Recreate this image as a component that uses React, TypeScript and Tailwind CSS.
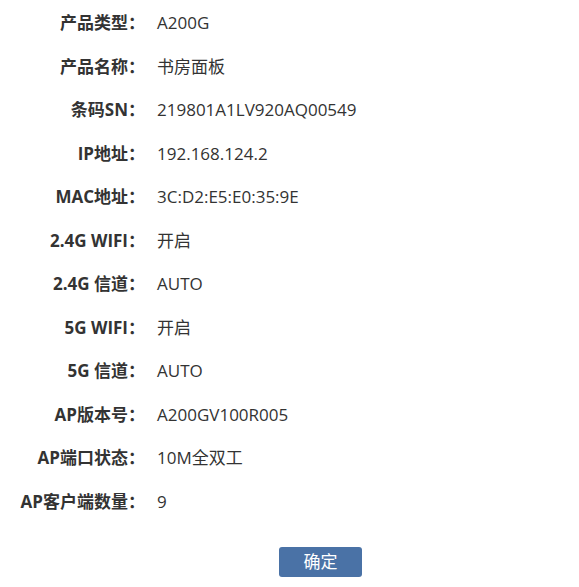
import React from "react";

const rows: [string, string][] = [
  ["产品类型：", "A200G"],
  ["产品名称：", "书房面板"],
  ["条码SN：", "219801A1LV920AQ00549"],
  ["IP地址：", "192.168.124.2"],
  ["MAC地址：", "3C:D2:E5:E0:35:9E"],
  ["2.4G WIFI：", "开启"],
  ["2.4G 信道：", "AUTO"],
  ["5G WIFI：", "开启"],
  ["5G 信道：", "AUTO"],
  ["AP版本号：", "A200GV100R005"],
  ["AP端口状态：", "10M全双工"],
  ["AP客户端数量：", "9"],
];

export default function App() {
  return (
    <div
      className="w-[579px] h-[587px] bg-white text-[#333] text-[17px] pt-[1px]"
      style={{ fontFamily: '"Open Sans", "Noto Sans CJK SC", sans-serif' }}
    >
      <div className="flex flex-col">
        {rows.map(([k, v]) => (
          <div key={k} className="flex items-center h-[43.55px]">
            <div className="w-[145px] text-right font-bold">{k}</div>
            <div className="ml-[12px]">{v}</div>
          </div>
        ))}
      </div>
      <div className="flex justify-center mt-[23px] pl-[62px]">
        <button className="w-[83px] h-[30px] rounded-[3px] bg-[#4a72a6] text-white text-[17px] leading-[30px]">
          确定
        </button>
      </div>
    </div>
  );
}
